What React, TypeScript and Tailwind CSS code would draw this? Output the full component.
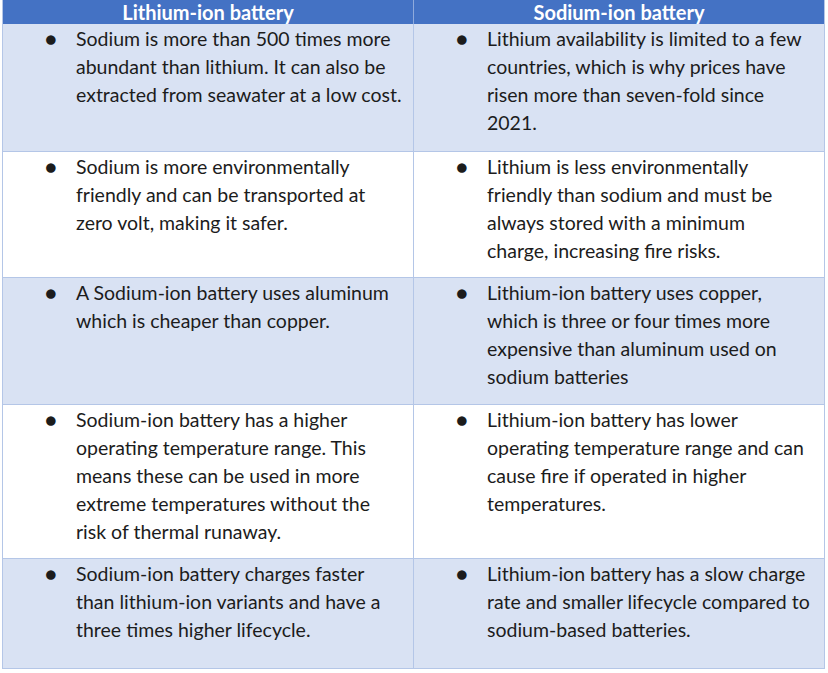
const rows: { left: string[]; right: string[]; shaded: boolean; h: string }[] = [
  {
    left: ["Sodium is more than 500 times more", "abundant than lithium. It can also be", "extracted from seawater at a low cost."],
    right: ["Lithium availability is limited to a few", "countries, which is why prices have", "risen more than seven-fold since", "2021."],
    shaded: true,
    h: "h-[127px]",
  },
  {
    left: ["Sodium is more environmentally", "friendly and can be transported at", "zero volt, making it safer."],
    right: ["Lithium is less environmentally", "friendly than sodium and must be", "always stored with a minimum", "charge, increasing fire risks."],
    shaded: false,
    h: "h-[126px]",
  },
  {
    left: ["A Sodium-ion battery uses aluminum", "which is cheaper than copper."],
    right: ["Lithium-ion battery uses copper,", "which is three or four times more", "expensive than aluminum used on", "sodium batteries"],
    shaded: true,
    h: "h-[127px]",
  },
  {
    left: ["Sodium-ion battery has a higher", "operating temperature range. This", "means these can be used in more", "extreme temperatures without the", "risk of thermal runaway."],
    right: ["Lithium-ion battery has lower", "operating temperature range and can", "cause fire if operated in higher", "temperatures."],
    shaded: false,
    h: "h-[154px]",
  },
  {
    left: ["Sodium-ion battery charges faster", "than lithium-ion variants and have a", "three times higher lifecycle."],
    right: ["Lithium-ion battery has a slow charge", "rate and smaller lifecycle compared to", "sodium-based batteries."],
    shaded: true,
    h: "h-[110px]",
  },
];

function Cell({ lines, right }: { lines: string[]; right?: boolean }) {
  return (
    <div className={right ? "flex pt-[1px]" : "flex pt-[1px] border-r border-[#b4c6e7]"}>
      <span className="w-[73px] shrink-0 pl-[42px] text-[19.5px] leading-[28px]">●</span>
      <div className="text-[19.5px] leading-[28px] whitespace-nowrap">
        {lines.map((l) => (
          <div key={l}>{l}</div>
        ))}
      </div>
    </div>
  );
}

export default function App() {
  return (
    <div className="w-[828px] h-[673px] bg-white text-[#1c1c1c] font-['Lato','Noto_Sans',sans-serif]">
      <div className="ml-[2px] w-[823px] border-l border-r border-b border-[#b4c6e7]">
        <div className="grid grid-cols-[411px_1fr] h-[24px] bg-[#4472c4] text-white font-bold text-[20px] leading-[24px]">
          <div className="text-center border-r border-[#8faadc]">Lithium-ion battery</div>
          <div className="text-center">Sodium-ion battery</div>
        </div>
        {rows.map((r, i) => (
          <div
            key={i}
            className={`grid grid-cols-[411px_1fr] ${r.h} ${i > 0 ? "border-t border-[#b4c6e7]" : ""} ${r.shaded ? "bg-[#d9e2f3]" : "bg-white"}`}
          >
            <Cell lines={r.left} />
            <Cell lines={r.right} right />
          </div>
        ))}
      </div>
    </div>
  );
}
